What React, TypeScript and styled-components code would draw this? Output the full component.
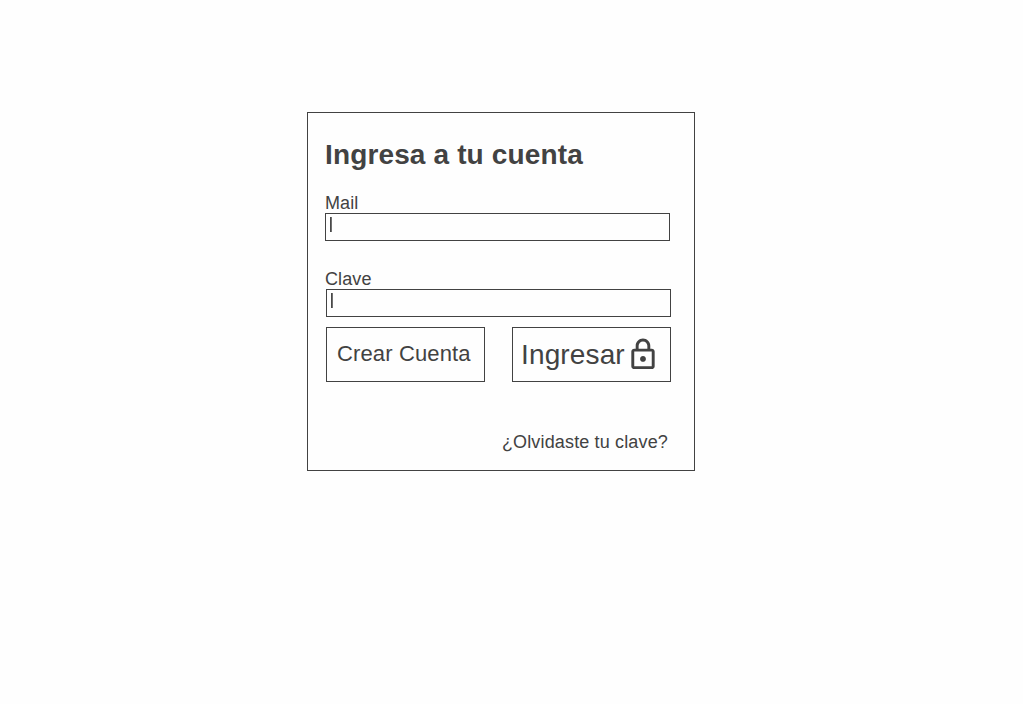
import React from "react";
import styled, { createGlobalStyle } from "styled-components";

const ink = "#424242";

const GlobalStyle = createGlobalStyle`
  *, *::before, *::after { box-sizing: border-box; }
  body {
    margin: 0;
    background: #fefefe;
    color: ${ink};
    font-family: "Liberation Sans", Arial, sans-serif;
  }
`;

const Page = styled.main`
  padding: 112px 0 0 307px;
`;

const Card = styled.form`
  width: 388px;
  height: 359px;
  padding: 26px 23px 0 17px;
  border: 1px solid ${ink};
`;

const Title = styled.h1`
  margin: 0 0 20px;
  font-size: 28px;
  line-height: 32px;
  font-weight: 700;
  letter-spacing: 0.14px;
  white-space: nowrap;
`;

const Field = styled.label`
  display: block;
  height: 76px;
  font-size: 18px;
  line-height: 22px;
`;

const Caption = styled.span`
  display: block;
  height: 22px;
  padding-top: 1px;
  letter-spacing: 0.1px;
`;

const Box = styled.span<{ $indent?: number }>`
  display: flex;
  width: 345px;
  height: 28px;
  margin-left: ${(p) => p.$indent ?? 0}px;
  padding: 3px 0 0 4px;
  border: 1px solid ${ink};
`;

const Caret = styled.span`
  width: 2px;
  height: 15px;
  background: linear-gradient(to right, #484848 50%, #707070 50%);
`;

const Actions = styled.div`
  display: flex;
  gap: 27px;
  margin: -16px 0 0 1px;
  height: 55px;
`;

const Button = styled.button<{ $size: number; $left: number; $bottom?: number }>`
  display: flex;
  align-items: center;
  width: 159px;
  height: 55px;
  padding: 0 0 ${(p) => p.$bottom ?? 0}px ${(p) => p.$left}px;
  border: 1px solid ${ink};
  background: transparent;
  color: inherit;
  font: ${(p) => p.$size}px "Liberation Sans", Arial, sans-serif;
  letter-spacing: 0.14px;
  white-space: nowrap;
`;

const LockIcon = styled.svg`
  flex: none;
  width: 35px;
  height: 35px;
  margin-left: 1.1px;
`;

const Forgot = styled.div`
  margin-top: 49px;
  padding-right: 3px;
  font-size: 18px;
  line-height: 22px;
  letter-spacing: 0.15px;
  text-align: right;
`;

export default function App() {
  return (
    <Page>
      <GlobalStyle />
      <Card>
        <Title>Ingresa a tu cuenta</Title>
        <Field>
          <Caption>Mail</Caption>
          <Box><Caret /></Box>
        </Field>
        <Field>
          <Caption>Clave</Caption>
          <Box $indent={1}><Caret /></Box>
        </Field>
        <Actions>
          <Button type="button" $size={22} $left={10} $bottom={2}>Crear Cuenta</Button>
          <Button type="button" $size={28} $left={8}>
            Ingresar
            <LockIcon viewBox="0.35 0 24 24" fill={ink}>
              <path d="M18 8h-1V6c0-2.76-2.24-5-5-5S7 3.240 7 6v2H6c-1.100 0-2 .9-2 2v10c0 1.100.9 2 2 2h12c1.100 0 2-.9 2-2V10c0-1.100-.9-2-2-2zM9 6c0-1.660 1.340-3 3-3s3 1.340 3 3v2H9V6zm9 14H6V10h12v10zm-6-3c1.100 0 2-.9 2-2s-.9-2-2-2-2 .9-2 2 .9 2 2 2z" />
            </LockIcon>
          </Button>
        </Actions>
        <Forgot>¿Olvidaste tu clave?</Forgot>
      </Card>
    </Page>
  );
}
